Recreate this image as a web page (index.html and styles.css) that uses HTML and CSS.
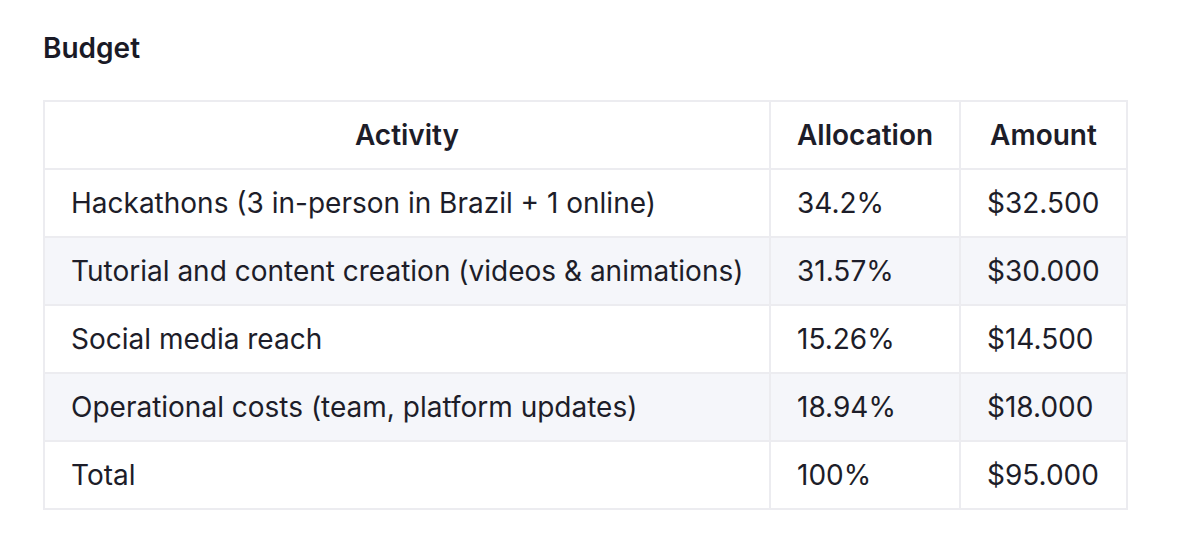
FILE: index.html
```html
<!DOCTYPE html>
<html lang="en">
<head>
<meta charset="utf-8">
<title>Budget</title>
<link rel="stylesheet" href="styles.css">
</head>
<body>
<main class="page">
  <h2 class="title">Budget</h2>
  <table class="budget">
    <colgroup>
      <col class="col-activity">
      <col class="col-allocation">
      <col class="col-amount">
    </colgroup>
    <thead>
      <tr><th>Activity</th><th>Allocation</th><th>Amount</th></tr>
    </thead>
    <tbody>
      <tr><td>Hackathons (3 in-person in Brazil + 1 online)</td><td>34.2%</td><td>$32.500</td></tr>
      <tr><td>Tutorial and content creation (videos &amp; animations)</td><td>31.57%</td><td>$30.000</td></tr>
      <tr><td>Social media reach</td><td>15.26%</td><td>$14.500</td></tr>
      <tr><td>Operational costs (team, platform updates)</td><td>18.94%</td><td>$18.000</td></tr>
      <tr><td>Total</td><td>100%</td><td>$95.000</td></tr>
    </tbody>
  </table>
</main>
</body>
</html>
```
FILE: styles.css
```css
html, body {
  margin: 0;
  padding: 0;
  background: #ffffff;
}
body {
  font-family: Inter, "Noto Sans", "Liberation Sans", sans-serif;
  color: #1d1d29;
}
.page {
  padding: 30px 0 0 43px;
}
.title {
  margin: 0 0 34px 0;
  font-size: 28px;
  line-height: 36px;
  font-weight: 600;
  color: #1a1a26;
}
.budget {
  border-collapse: collapse;
  table-layout: fixed;
  width: 1083px;
  font-size: 28px;
  line-height: 36px;
}
.col-activity { width: 726px; }
.col-allocation { width: 190px; }
.col-amount { width: 167px; }
.budget th,
.budget td {
  border: 2px solid #ececf0;
  padding: 15px 26px;
  white-space: nowrap;
}
.budget th {
  font-weight: 600;
  text-align: center;
}
.budget td {
  font-weight: 400;
  text-align: left;
}
.budget tbody tr:nth-child(even) td {
  background: #f5f6fa;
}
```
